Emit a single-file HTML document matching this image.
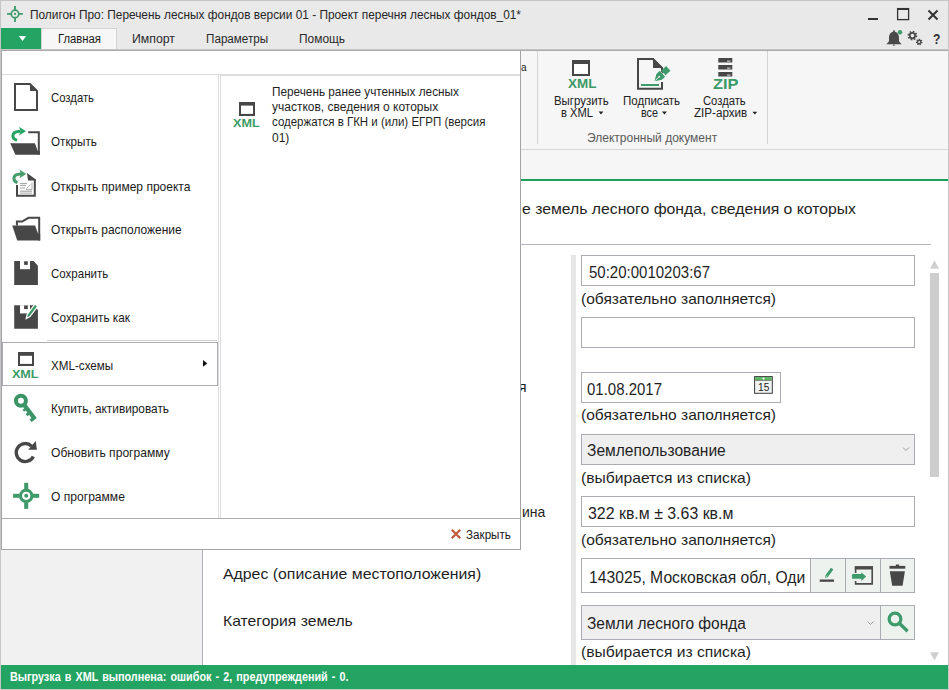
<!DOCTYPE html>
<html><head><meta charset="utf-8">
<style>
*{margin:0;padding:0;box-sizing:border-box}
html,body{width:949px;height:690px;overflow:hidden;background:#fff;font-family:"Liberation Sans",sans-serif;color:#222}
.a{position:absolute}
.t{position:absolute;white-space:pre;transform-origin:0 0;z-index:2}
.m{z-index:10}
.mt .t{z-index:12}
svg{position:absolute;left:0;top:0;overflow:visible}
</style></head><body>
<!-- title bar -->
<div class="a" style="left:0;top:0;width:949px;height:50px;background:#e9e9e9"></div>
<div class="a" style="left:0;top:0;width:949px;height:1px;background:#c4c4c4"></div>
<!-- tabs row -->
<div class="a" style="left:1px;top:28px;width:40px;height:22px;background:#23a463"></div>
<div class="a" style="left:41px;top:28px;width:76px;height:21px;background:#f7f7f7;border:1px solid #d4d4d4;border-bottom:none"></div>
<div class="a" style="left:0;top:49px;width:949px;height:1px;background:#c6c6c6"></div>
<div class="a" style="left:0;top:50px;width:949px;height:1px;background:#a9a9a9"></div>
<!-- ribbon -->
<div class="a" style="left:0;top:51px;width:949px;height:98px;background:#f6f6f6"></div>
<div class="a" style="left:0;top:149px;width:949px;height:1px;background:#d6d6d6"></div>
<div class="a" style="left:537px;top:51px;width:1px;height:93px;background:#d4d4d4"></div>
<div class="a" style="left:767px;top:51px;width:1px;height:93px;background:#d4d4d4"></div>
<div class="a" style="left:0;top:150px;width:949px;height:29px;background:#f6f6f6"></div>
<div class="a" style="left:0;top:179px;width:949px;height:2px;background:#1c9f5b"></div>
<!-- content -->
<div class="a" style="left:0;top:181px;width:203px;height:484px;background:#f1f1f1;border-right:1px solid #b0b0b8"></div>
<div class="a" style="left:212px;top:244px;width:719px;height:1px;background:#b6b6be"></div>
<div class="a" style="left:571px;top:255px;width:5px;height:410px;background:#e6e6e6"></div>
<div class="a" style="left:581px;top:255px;width:334px;height:31px;border:1px solid #ababb3;background:#fff"></div>
<div class="a" style="left:581px;top:317px;width:334px;height:31px;border:1px solid #ababb3;background:#fff"></div>
<div class="a" style="left:581px;top:372px;width:200px;height:31px;border:1px solid #ababb3;background:#fff"></div>
<div class="a" style="left:581px;top:434px;width:334px;height:31px;border:1px solid #ababb3;background:#efefef"></div>
<div class="a" style="left:581px;top:496px;width:334px;height:31px;border:1px solid #ababb3;background:#fff"></div>
<div class="a" style="left:581px;top:558px;width:230px;height:35px;border:1px solid #ababb3;background:#fff"></div>
<div class="a" style="left:581px;top:605px;width:300px;height:35px;border:1px solid #ababb3;background:#efefef"></div>
<!-- scrollbar -->
<div class="a" style="left:930px;top:273px;width:9px;height:204px;background:#cdcdcd"></div>
<!-- status -->
<div class="a" style="left:0;top:665px;width:949px;height:24px;background:#23a463"></div>
<div class="a" style="left:0;top:689px;width:949px;height:1px;background:#c8c8c8"></div>
<!-- window borders -->
<div class="a" style="left:0;top:0;width:1px;height:690px;background:#c6c6c6;z-index:20"></div>
<div class="a" style="left:948px;top:0;width:1px;height:690px;background:#c6c6c6;z-index:20"></div>

<div class="t" style="left:30.00px;top:8.54px;font-size:12px;line-height:12px;color:#262626;transform:scaleX(0.9888);">Полигон Про: Перечень лесных фондов версии 01 - Проект перечня лесных фондов_01*</div>
<div class="t" style="left:57.60px;top:33.04px;font-size:12px;line-height:12px;color:#1a1a1a;transform:scaleX(0.9412);">Главная</div>
<div class="t" style="left:132.30px;top:33.04px;font-size:12px;line-height:12px;color:#2a2a2a;transform:scaleX(1.0250);">Импорт</div>
<div class="t" style="left:205.50px;top:33.04px;font-size:12px;line-height:12px;color:#2a2a2a;transform:scaleX(0.9723);">Параметры</div>
<div class="t" style="left:298.60px;top:33.04px;font-size:12px;line-height:12px;color:#2a2a2a;transform:scaleX(0.9944);">Помощь</div>
<div class="t" style="left:520.80px;top:61.89px;font-size:11px;line-height:11px;color:#222;transform:scaleX(0.9143);">а</div>
<div class="t" style="left:553.70px;top:94.84px;font-size:12px;line-height:12px;color:#222;transform:scaleX(0.9513);">Выгрузить</div>
<div class="t" style="left:561.40px;top:107.44px;font-size:12px;line-height:12px;color:#222;transform:scaleX(0.9305);">в XML</div>
<div class="t" style="left:622.90px;top:94.84px;font-size:12px;line-height:12px;color:#222;transform:scaleX(0.9612);">Подписать</div>
<div class="t" style="left:640.50px;top:107.44px;font-size:12px;line-height:12px;color:#222;transform:scaleX(0.8984);">все</div>
<div class="t" style="left:702.60px;top:94.84px;font-size:12px;line-height:12px;color:#222;transform:scaleX(0.9362);">Создать</div>
<div class="t" style="left:694.00px;top:107.44px;font-size:12px;line-height:12px;color:#222;transform:scaleX(0.9696);">ZIP-архив</div>
<div class="t" style="left:587.40px;top:132.24px;font-size:12px;line-height:12px;color:#5a5a5a;transform:scaleX(1.0013);">Электронный документ</div>
<div class="t" style="left:522.30px;top:200.90px;font-size:15.0px;line-height:15.0px;color:#1f1f1f;transform:scaleX(1.0503);">е земель лесного фонда, сведения о которых</div>
<div class="t" style="left:518.60px;top:379.00px;font-size:15.0px;line-height:15.0px;color:#1f1f1f;">я</div>
<div class="t" style="left:521.80px;top:503.70px;font-size:15.0px;line-height:15.0px;color:#1f1f1f;transform:scaleX(0.9314);">ина</div>
<div class="t" style="left:223.30px;top:566.20px;font-size:15.0px;line-height:15.0px;color:#1f1f1f;transform:scaleX(1.0558);">Адрес (описание местоположения)</div>
<div class="t" style="left:223.30px;top:613.40px;font-size:15.0px;line-height:15.0px;color:#1f1f1f;transform:scaleX(1.0461);">Категория земель</div>
<div class="t" style="left:588.50px;top:264.79px;font-size:15.6px;line-height:15.6px;color:#1f1f1f;transform:scaleX(0.9622);">50:20:0010203:67</div>
<div class="t" style="left:581.00px;top:290.50px;font-size:15.0px;line-height:15.0px;color:#1f1f1f;transform:scaleX(1.0361);">(обязательно заполняется)</div>
<div class="t" style="left:587.40px;top:381.79px;font-size:15.6px;line-height:15.6px;color:#1f1f1f;transform:scaleX(0.9610);">01.08.2017</div>
<div class="t" style="left:581.00px;top:407.20px;font-size:15.0px;line-height:15.0px;color:#1f1f1f;transform:scaleX(1.0361);">(обязательно заполняется)</div>
<div class="t" style="left:586.90px;top:443.39px;font-size:15.6px;line-height:15.6px;color:#1f1f1f;transform:scaleX(0.9984);">Землепользование</div>
<div class="t" style="left:581.00px;top:470.20px;font-size:15.0px;line-height:15.0px;color:#1f1f1f;transform:scaleX(1.0436);">(выбирается из списка)</div>
<div class="t" style="left:588.00px;top:505.69px;font-size:15.6px;line-height:15.6px;color:#1f1f1f;transform:scaleX(1.0198);">322 кв.м ± 3.63 кв.м</div>
<div class="t" style="left:581.00px;top:531.90px;font-size:15.0px;line-height:15.0px;color:#1f1f1f;transform:scaleX(1.0361);">(обязательно заполняется)</div>
<div class="t" style="left:589.10px;top:570.39px;font-size:15.6px;line-height:15.6px;color:#1f1f1f;transform:scaleX(1.0070);">143025, Московская обл, Одинцовский</div>
<div class="t" style="left:586.50px;top:616.39px;font-size:15.6px;line-height:15.6px;color:#1f1f1f;transform:scaleX(0.9928);">Земли лесного фонда</div>
<div class="t" style="left:581.00px;top:644.20px;font-size:15.0px;line-height:15.0px;color:#1f1f1f;transform:scaleX(1.0436);">(выбирается из списка)</div>
<div class="t" style="left:10.10px;top:671.88px;font-size:11.95px;line-height:11.95px;color:#ffffff;font-weight:bold;transform:scaleX(0.9050);word-spacing:1.2px;">Выгрузка в XML выполнена: ошибок - 2, предупреждений - 0.</div>
<div class="t" style="left:567.80px;top:76.70px;font-size:13px;line-height:13px;color:#3b9a66;font-weight:bold;transform:scaleX(1.0345);">XML</div>
<div class="t" style="left:713.00px;top:77.23px;font-size:14.5px;line-height:14.5px;color:#3b9a66;font-weight:bold;transform:scaleX(1.1302);">ZIP</div>
<div class="t" style="left:932.90px;top:31.46px;font-size:15.4px;line-height:15.4px;color:#333;font-weight:bold;transform:scaleX(0.7867);">?</div>
<div class="t" style="left:757.80px;top:382.74px;font-size:10px;line-height:10px;color:#222;transform:scaleX(1.0157);z-index:6;">15</div>

<!-- address buttons (cover text) -->
<div class="a" style="left:805px;top:559px;width:5px;height:33px;background:#fff;z-index:3"></div>
<div class="a" style="left:810px;top:558px;width:36px;height:35px;border:1px solid #ababb3;background:#eef2ef;z-index:3"></div>
<div class="a" style="left:845px;top:558px;width:36px;height:35px;border:1px solid #ababb3;background:#eef2ef;z-index:3"></div>
<div class="a" style="left:880px;top:558px;width:35px;height:35px;border:1px solid #ababb3;background:#eef2ef;z-index:3"></div>
<div class="a" style="left:880px;top:605px;width:35px;height:35px;border:1px solid #ababb3;background:#eef2ef;z-index:3"></div>

<svg width="949" height="690" style="z-index:4">
 <!-- title icon -->
 <g stroke="#3d9a6a" fill="none">
  <circle cx="15" cy="13.9" r="3.75" stroke-width="1.7"/>
  <path d="M15,5.9V10.2M15,17.6V22M7,13.9H11.3M18.7,13.9H22.8" stroke-width="1.8"/>
 </g>
 <circle cx="15" cy="13.9" r="1.1" fill="#3d9a6a"/>
 <!-- tab triangle -->
 <path d="M18.8,36 H26.2 L22.5,41 Z" fill="#fff"/>
 <!-- window controls -->
 <rect x="868" y="18" width="10" height="2" fill="#333"/>
 <rect x="897.6" y="8.6" width="11" height="11" fill="none" stroke="#333" stroke-width="1.3"/>
 <rect x="897" y="8" width="12" height="2" fill="#333"/>
 <path d="M928.5,10.5L937.5,19.5M937.5,10.5L928.5,19.5" stroke="#333" stroke-width="2"/>
 <!-- bell -->
 <path d="M894,31.8c-3.3,0-5,2.6-5,6.2v3.2l-2.6,3h15.2l-2.6-3v-3.2c0-3.6-1.7-6.2-5-6.2z" fill="#4a4a4a"/>
 <circle cx="894" cy="31.3" r="1" fill="#4a4a4a"/>
 <rect x="893" y="44.6" width="2" height="1" fill="#4a4a4a"/>
 <circle cx="900" cy="32.3" r="2.2" fill="#3d9a6a"/>
 <!-- gears -->
 <circle cx="912.4" cy="35.6" r="2.7" fill="none" stroke="#4a4a4a" stroke-width="1.8"/>
 <circle cx="912.4" cy="35.6" r="4.1" fill="none" stroke="#4a4a4a" stroke-width="1.6" stroke-dasharray="1.6 1.6"/>
 <circle cx="919.2" cy="42" r="1.7" fill="none" stroke="#4a4a4a" stroke-width="1.4"/>
 <circle cx="919.2" cy="42" r="2.7" fill="none" stroke="#4a4a4a" stroke-width="1.2" stroke-dasharray="1.3 1.1"/>
 <!-- ribbon: XML export -->
 <rect x="572" y="60" width="18" height="16" fill="#474747"/>
 <rect x="574" y="64" width="14" height="10" fill="#fff"/>
 <path d="M598.6,111.6H603.4L601,114.4Z" fill="#222"/>
 <!-- sign doc -->
 <path d="M662,75.5V68L653,59H638V88.7H662V82" fill="none" stroke="#474747" stroke-width="2"/>
 <path d="M653,58L663,68H653Z" fill="#474747"/>
 <rect x="641" y="84" width="18" height="2" fill="#3d9a6a"/>
 <g transform="translate(654.4,81.3) rotate(-43)">
  <path d="M-1,0L6.5,-5L11.5,-5L11.5,5L6.5,5Z" fill="#f6f6f6"/>
  <path d="M0,0L6.5,-4L11,-4L11,4L6.5,4Z" fill="#3d9a6a"/>
  <rect x="12.2" y="-3.2" width="6.8" height="6.4" fill="#3d9a6a"/>
  <path d="M1,0H6.5" stroke="#f6f6f6" stroke-width="0.9"/>
  <circle cx="6.8" cy="0" r="0.9" fill="#f6f6f6"/>
 </g>
 
 
 <path d="M662,111.6H666.8L664.4,114.4Z" fill="#222"/>
 <!-- zip -->
 <rect x="718.3" y="58" width="14" height="4.5" fill="#474747"/>
 <rect x="718.3" y="65" width="14" height="4.5" fill="#474747"/>
 <rect x="718.3" y="72" width="14" height="4.5" fill="#474747"/>
 <rect x="727" y="60.6" width="3.5" height="1" fill="#ddd"/>
 <rect x="727" y="67.6" width="3.5" height="1" fill="#ddd"/>
 <rect x="727" y="74.6" width="3.5" height="1" fill="#ddd"/>
 <path d="M752.4,111.8H757.2L754.8,114.6Z" fill="#222"/>
 <!-- calendar -->
 <rect x="754.6" y="376.6" width="17.7" height="16.7" fill="#f2f3f4" stroke="#3a3a3a" stroke-width="1"/>
 <rect x="755.1" y="377.1" width="16.7" height="3.2" fill="#5bb661"/>
 <rect x="755.1" y="380.3" width="16.7" height="0.7" fill="#666"/>
 <circle cx="763.5" cy="378.6" r="1.1" fill="#fff"/>
 <!-- combo chevrons -->
 <path d="M903,447.5L906,450.5L909,447.5" fill="none" stroke="#9a9aa2" stroke-width="1"/>
 <path d="M867.5,621.5L870.5,624.5L873.5,621.5" fill="none" stroke="#9a9aa2" stroke-width="1"/>
 <!-- scroll arrows -->
 <path d="M930,268.7H939L934.5,260.2Z" fill="#d0d0d0"/>
 <path d="M930,652.2H939L934.5,660.4Z" fill="#d0d0d0"/>
</svg>
<svg width="949" height="690" style="z-index:5">
 <!-- address buttons icons -->
 <rect x="819.7" y="579.5" width="14.3" height="2.3" fill="#474747"/>
 <path d="M825,578.2L825.6,574.9L831,567.7L833.4,569.5L828,576.7Z" fill="#3d9a6a"/>
 <path d="M825.5,577.4L827,575.6" stroke="#dfeee5" stroke-width="0.7"/>
 <path d="M855.6,573V567.2H872.2V583.9H855.6V581" fill="none" stroke="#4a4a4a" stroke-width="1.6"/>
 <rect x="854.8" y="566.2" width="18.2" height="3.3" fill="#4a4a4a"/>
 <path d="M852.1,574H861.3V572.3L866.1,576.6L861.3,580.9V578.8H852.1Z" fill="#3d9a6a"/>
 <rect x="889.5" y="565.9" width="15.8" height="2.8" fill="#474747"/>
 <rect x="895.8" y="564.5" width="3.4" height="2" fill="#474747"/>
 <path d="M889.8,571.3H904.9L902.6,585.7H892.2Z" fill="#474747"/>
 <!-- search -->
 <circle cx="895" cy="619" r="5.9" fill="none" stroke="#3d9a6a" stroke-width="3.2"/>
 <path d="M899.6,623.6L907.6,631.2" stroke="#3d9a6a" stroke-width="3.4"/>
</svg>

<!-- MENU -->
<div class="a m" style="left:1px;top:51px;width:520px;height:499px;background:#fff;border:1px solid #a4a4a4;border-top:none"></div>
<div class="a m" style="left:2px;top:74px;width:518px;height:1px;background:#dcdcdc"></div>
<div class="a m" style="left:218px;top:75px;width:1px;height:443px;background:#dcdcdc"></div>
<div class="a m" style="left:220px;top:75px;width:300px;height:1px;background:#dcdcdc"></div>
<div class="a m" style="left:220px;top:75px;width:1px;height:443px;background:#dcdcdc"></div>
<div class="a m" style="left:2px;top:518px;width:518px;height:1px;background:#acacac"></div>
<div class="a m" style="left:47px;top:340px;width:170px;height:1px;background:#cfcfcf"></div>
<div class="a m" style="left:2px;top:342px;width:216px;height:44px;border:1px solid #acacb4"></div>
<div class="mt">
<div class="t" style="left:12.20px;top:368.77px;font-size:11.5px;line-height:11.5px;color:#3b9a66;font-weight:bold;transform:scaleX(1.0914);">XML</div>
<div class="t" style="left:233.10px;top:118.17px;font-size:11.5px;line-height:11.5px;color:#3b9a66;font-weight:bold;transform:scaleX(1.0996);">XML</div>
<div class="t" style="left:51.00px;top:92.30px;font-size:12.4px;line-height:12.4px;color:#1a1a1a;transform:scaleX(0.9131);">Создать</div>
<div class="t" style="left:51.00px;top:136.30px;font-size:12.4px;line-height:12.4px;color:#1a1a1a;transform:scaleX(0.9410);">Открыть</div>
<div class="t" style="left:51.00px;top:180.50px;font-size:12.4px;line-height:12.4px;color:#1a1a1a;transform:scaleX(0.9697);">Открыть пример проекта</div>
<div class="t" style="left:51.00px;top:224.30px;font-size:12.4px;line-height:12.4px;color:#1a1a1a;transform:scaleX(0.9647);">Открыть расположение</div>
<div class="t" style="left:51.00px;top:268.30px;font-size:12.4px;line-height:12.4px;color:#1a1a1a;transform:scaleX(0.9305);">Сохранить</div>
<div class="t" style="left:51.00px;top:312.30px;font-size:12.4px;line-height:12.4px;color:#1a1a1a;transform:scaleX(0.9514);">Сохранить как</div>
<div class="t" style="left:51.00px;top:359.50px;font-size:12.4px;line-height:12.4px;color:#1a1a1a;transform:scaleX(0.9400);">XML-схемы</div>
<div class="t" style="left:51.00px;top:403.00px;font-size:12.4px;line-height:12.4px;color:#1a1a1a;transform:scaleX(0.9547);">Купить, активировать</div>
<div class="t" style="left:51.00px;top:447.30px;font-size:12.4px;line-height:12.4px;color:#1a1a1a;transform:scaleX(0.9760);">Обновить программу</div>
<div class="t" style="left:51.00px;top:491.30px;font-size:12.4px;line-height:12.4px;color:#1a1a1a;transform:scaleX(0.9748);">О программе</div>
<div class="t" style="left:272.00px;top:85.64px;font-size:12px;line-height:12px;color:#1f1f1f;transform:scaleX(0.9812);">Перечень ранее учтенных лесных</div>
<div class="t" style="left:272.00px;top:100.94px;font-size:12px;line-height:12px;color:#1f1f1f;">участков, сведения о которых</div>
<div class="t" style="left:272.00px;top:116.34px;font-size:12px;line-height:12px;color:#1f1f1f;transform:scaleX(0.9580);">содержатся в ГКН и (или) ЕГРП (версия</div>
<div class="t" style="left:272.00px;top:131.64px;font-size:12px;line-height:12px;color:#1f1f1f;">01)</div>
<div class="t" style="left:465.80px;top:529.04px;font-size:12px;line-height:12px;color:#1a1a1a;transform:scaleX(0.9715);">Закрыть</div>
</div>
<svg width="949" height="690" style="z-index:13">
 <g fill="#474747">
 <!-- Создать -->
 <path d="M15,84H30L37,91V110H15Z" fill="none" stroke="#474747" stroke-width="2"/>
 <path d="M30,84.5L36.5,91H30Z"/>
 <!-- Открыть -->
 <path d="M28.2,132.2H38.8V154.8" fill="none" stroke="#474747" stroke-width="2"/>
 <path d="M10.2,143.2H34.9L37.8,151H39.8V154.8H15.4Z"/>
 <!-- Открыть пример -->
 <path d="M17,185V195.8H34.8V179.5" fill="none" stroke="#474747" stroke-width="2"/>
 <path d="M27,173L35.8,179.5V180.5H28Z"/>
 <g fill="#a8a8a8"><rect x="20" y="183" width="7" height="1.2"/><rect x="20" y="185" width="6" height="1"/><rect x="20" y="187.5" width="5" height="1"/><rect x="20" y="190.6" width="12" height="1.2"/><rect x="20" y="192.6" width="12" height="1"/></g>
 <path d="M26.5,188.5L30.5,184.5M26,189.5H32V182.5" fill="none" stroke="#b0b0b0" stroke-width="1"/>
 <!-- Открыть расположение -->
 <path d="M16.9,225.4V221.6H22.1L28.5,217.8H39.2V240.4" fill="none" stroke="#474747" stroke-width="2"/>
 <path d="M12.2,225.4H35.1L38.2,234H40.2V240.6H17.2Z"/>
 <!-- Сохранить -->
 <path d="M14.2,261H33.7L37.9,265.7V284.9H14.2Z"/>
 <rect x="20" y="261" width="10" height="8.2" fill="#fff"/>
 <rect x="24.1" y="261.3" width="3.7" height="3.6"/>
 <!-- Сохранить как -->
 <path d="M14.2,305.2H33.7L37.9,309.9V328.7H14.2Z"/>
 <rect x="20" y="305.2" width="10" height="8.2" fill="#fff"/>
 <rect x="24.1" y="305.5" width="3.7" height="3.6"/>
 <!-- XML-схемы -->
 <rect x="18" y="352" width="16" height="14"/>
 <rect x="20" y="355.8" width="12" height="8.1" fill="#fff"/>
 <!-- right panel xml -->
 <rect x="239" y="102" width="16" height="14"/>
 <rect x="241" y="105.6" width="12" height="8.3" fill="#fff"/>
 <!-- refresh -->
 <path d="M33.35,456.5A9,9 0 1 1 31.6,446.2" fill="none" stroke="#474747" stroke-width="3.4"/>
 <path d="M35.7,441.1L36.9,449.8H28.2Z"/>
 <!-- submenu arrow -->
 <path d="M203,360L207.3,363.4L203,366.8Z" fill="#111"/>
 </g>
 <!-- green arrows -->
 <g stroke="#22a561" fill="none" stroke-width="3">
  <path d="M20.5,131.3C15.5,131.3 12.9,133.2 12.9,136C12.9,138.2 14.5,139.6 17,140.4"/>
 </g>
 <path d="M19,126.8L25.9,131.2L19,135.6L20.6,131.2Z" fill="#22a561"/>
 <g stroke="#449c6c" fill="none" stroke-width="3">
  <path d="M21,174C16,174 13.9,175.7 13.9,178.5C13.9,180.6 15.2,181.9 17.5,182.6"/>
 </g>
 <path d="M19.4,169.6L26.2,173.9L19.4,178.3L21,173.9Z" fill="#449c6c"/>
 <!-- pencil on save-as -->
 <path d="M26.2,318.6L27.2,314.3L34.9,304.1L37.7,306.3L30,316.5Z" fill="#3d9a6a" stroke="#fff" stroke-width="1.2"/>
 <!-- key -->
 <g fill="#3b9466">
  <circle cx="20.9" cy="400.8" r="5" fill="none" stroke="#3b9466" stroke-width="4"/>
  <g transform="translate(23.5,404) rotate(52.8)">
   <rect x="0" y="-2.1" width="19.2" height="4.2"/>
   <rect x="4" y="1" width="2.6" height="3.3"/>
   <rect x="9.2" y="1" width="2.8" height="3.3"/>
   <rect x="16" y="1" width="3.2" height="3.5"/>
  </g>
 </g>
 <!-- about -->
 <g fill="#3e9a6a">
  <circle cx="26.2" cy="495.8" r="5.65" fill="none" stroke="#3e9a6a" stroke-width="3.1"/>
  <circle cx="26.2" cy="495.8" r="2"/>
  <rect x="24.2" y="482.8" width="4" height="6.5"/>
  <rect x="24.2" y="502.3" width="4" height="6.6"/>
  <rect x="13.1" y="493.8" width="6.5" height="4"/>
  <rect x="32.8" y="493.8" width="6.4" height="4"/>
 </g>
 <!-- close x -->
 <path d="M451.8,529.8L460.2,538.2M460.2,529.8L451.8,538.2" stroke="#c25a3c" stroke-width="2.3"/>
</svg>
</body></html>
